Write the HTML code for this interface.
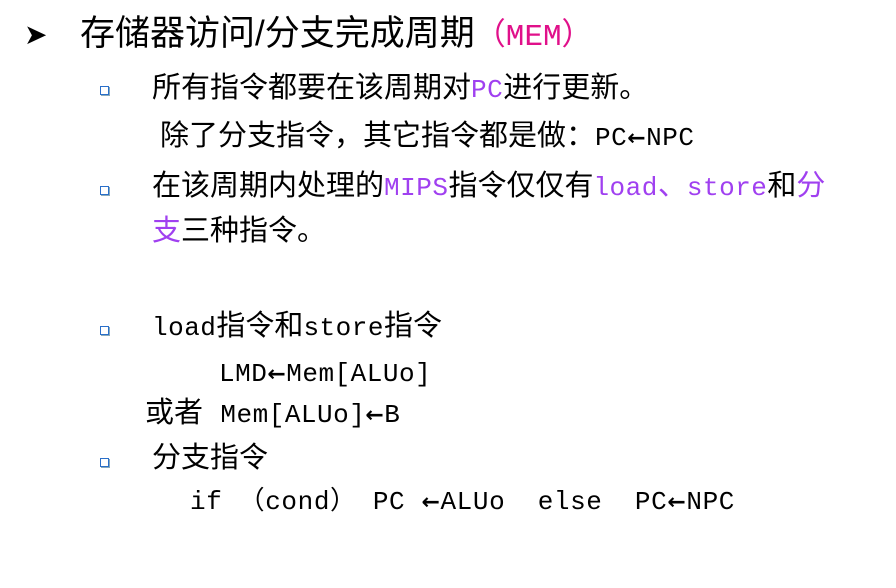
<!DOCTYPE html>
<html><head><meta charset="utf-8"><style>
body{margin:0;width:896px;height:588px;background:#fff;position:relative;overflow:hidden;color:#000}
.l{position:absolute;white-space:nowrap;font-family:"Liberation Mono","Noto Sans CJK SC",sans-serif;font-size:29px;line-height:32px}
.a{font-size:26px;letter-spacing:0.5px}
.r{font-family:"DejaVu Sans",sans-serif;font-weight:bold;font-size:22px}
.t{font-family:"Liberation Sans","Noto Sans CJK SC",sans-serif;font-size:35px;line-height:40px}
.p{color:#a040f0}
.m{color:#e0108a;font-family:"Liberation Mono","Noto Sans CJK SC",sans-serif;font-size:31px}
.b{position:absolute;width:7px;height:7px;border:1.5px solid #2a6fc9;box-shadow:1px 1px 0 #8ab}
</style></head><body>
<div class="l" style="left:24px;top:19px;font-size:28px;font-family:'DejaVu Sans',sans-serif">&#10148;</div>
<div class="l t" style="left:80px;top:14px">存储器访问/分支完成周期<span class="m">（MEM）</span></div>
<div class="b" style="left:100px;top:86px"></div>
<div class="l" style="left:152px;top:74px">所有指令都要在该周期对<span class="p a">PC</span>进行更新。</div>
<div class="l" style="left:160px;top:122px">除了分支指令，其它指令都是做：<span class="a">PC<span class="r">←</span>NPC</span></div>
<div class="b" style="left:100px;top:186px"></div>
<div class="l" style="left:152px;top:172px">在该周期内处理的<span class="p a">MIPS</span>指令仅仅有<span class="p"><span class="a">load</span>、<span class="a">store</span></span>和<span class="p">分</span></div>
<div class="l" style="left:152px;top:217px"><span class="p">支</span>三种指令。</div>
<div class="b" style="left:100px;top:326px"></div>
<div class="l" style="left:152px;top:312px"><span class="a">load</span>指令和<span class="a">store</span>指令</div>
<div class="l a" style="left:219px;top:358px">LMD<span class="r">←</span>Mem[ALUo]</div>
<div class="l" style="left:145px;top:399px">或者 <span class="a">Mem[ALUo]<span class="r">←</span>B</span></div>
<div class="b" style="left:100px;top:458px"></div>
<div class="l" style="left:152px;top:444px">分支指令</div>
<div class="l a" style="left:190px;top:486px;letter-spacing:0.6px">if （cond） PC <span class="r">←</span>ALUo&nbsp; else&nbsp; PC<span class="r">←</span>NPC</div>
</body></html>
